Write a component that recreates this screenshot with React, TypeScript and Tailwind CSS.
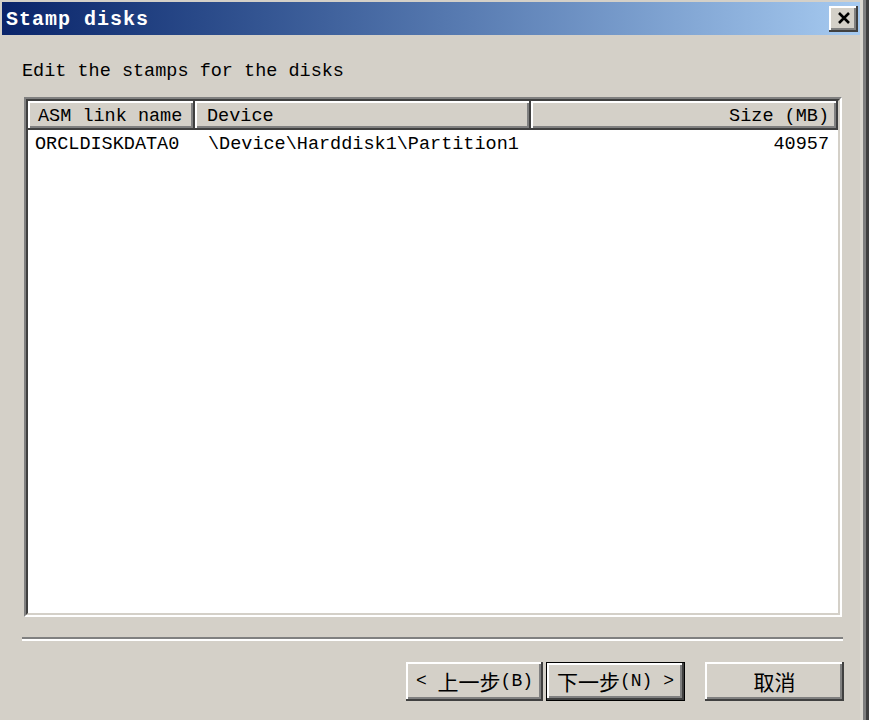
const mono = "font-['Liberation_Mono','Noto_Sans_CJK_SC',monospace]"

const raised =
  "shadow-[inset_-2px_-2px_0_#404040,inset_2px_2px_0_#ffffff,inset_-4px_-4px_0_#808080] bg-[#d4d0c8]"

const Cjk = ({ children }: { children: string }) => (
  <span className="text-[21px] font-['Noto_Sans_CJK_SC',sans-serif] leading-none">{children}</span>
)

const DialogButton = ({
  children,
  width,
  isDefault = false,
}: {
  children: React.ReactNode
  width: string
  isDefault?: boolean
}) => (
  <div className={`${width} h-[39px] ${isDefault ? "border border-black" : ""}`}>
    <button
      type="button"
      className={`w-full h-full flex items-center justify-center whitespace-pre text-black text-[18px] ${mono} ${raised}`}
    >
      {children}
    </button>
  </div>
)

const StampDisks = () => {
  return (
    <div className="w-[869px] h-[720px] bg-[#d4d0c8] flex overflow-hidden">
      <div className="w-[860px] flex flex-col pl-[2px] pt-[2px]">
        {/* title bar */}
        <div className="w-[858px] h-[33px] bg-linear-to-r from-[#0a246a] to-[#a6caf0] flex items-center justify-between pl-[4px] pr-[2px]">
          <span className={`pt-[3px] text-white font-bold text-[20px] tracking-[1px] ${mono}`}>Stamp disks</span>
          <div className={`w-[29px] h-[26px] flex items-center justify-center ${raised}`}>
            <svg width="14" height="12" viewBox="0 0 14 12" className="-mt-[1px]">
              <path d="M2 1 L12 11 M12 1 L2 11" stroke="#000" strokeWidth="2.6" />
            </svg>
          </div>
        </div>

        <div className="flex flex-col pl-[20px]">
          <p className={`mt-[26px] h-[22px] leading-[22px] text-[18.5px] text-black ${mono}`}>
            Edit the stamps for the disks
          </p>

          {/* list view */}
          <div className="mt-[14px] ml-[2px] w-[818px] h-[520px] border-2 border-t-[#808080] border-l-[#808080] border-r-white border-b-white">
            <div className="w-full h-full border-2 border-t-[#404040] border-l-[#404040] border-r-[#d4d0c8] border-b-[#d4d0c8] bg-white flex flex-col">
              <div className={`flex h-[29px] text-[18.5px] text-black ${mono}`}>
                <div className={`w-[167px] flex items-center pt-[3px] pl-[10px] ${raised}`}>ASM link name</div>
                <div className={`w-[336px] flex items-center pt-[3px] pl-[12px] ${raised}`}>Device</div>
                <div className={`flex-1 flex items-center justify-end pt-[3px] pr-[9px] ${raised}`}>Size (MB)</div>
              </div>
              <div className={`flex h-[26px] pt-[3px] items-center text-[18.5px] text-black ${mono}`}>
                <div className="w-[167px] pl-[7px]">ORCLDISKDATA0</div>
                <div className="w-[336px] pl-[13px] whitespace-nowrap">\Device\Harddisk1\Partition1</div>
                <div className="flex-1 text-right pr-[9px]">40957</div>
              </div>
            </div>
          </div>

          {/* separator */}
          <div className="mt-[20px] w-[821px] h-[4px] border-t-2 border-b-2 border-t-[#808080] border-b-white" />

          {/* buttons */}
          <div className="mt-[21px] w-[822px] flex justify-end">
            <div className="flex gap-[3px]">
              <DialogButton width="w-[137px]">
                <span>{"< "}</span>
                <Cjk>上一步</Cjk>
                <span>(B)</span>
              </DialogButton>
              <DialogButton width="w-[139px]" isDefault>
                <Cjk>下一步</Cjk>
                <span>{"(N) >"}</span>
              </DialogButton>
            </div>
            <div className="ml-[20px]">
              <DialogButton width="w-[139px]">
                <Cjk>取消</Cjk>
              </DialogButton>
            </div>
          </div>
        </div>
      </div>
      <div className="w-[3px] bg-[#dcd8d0]" />
      <div className="w-[3px] bg-[#808080]" />
      <div className="w-[3px] bg-[#404040]" />
    </div>
  )
}

export default StampDisks
